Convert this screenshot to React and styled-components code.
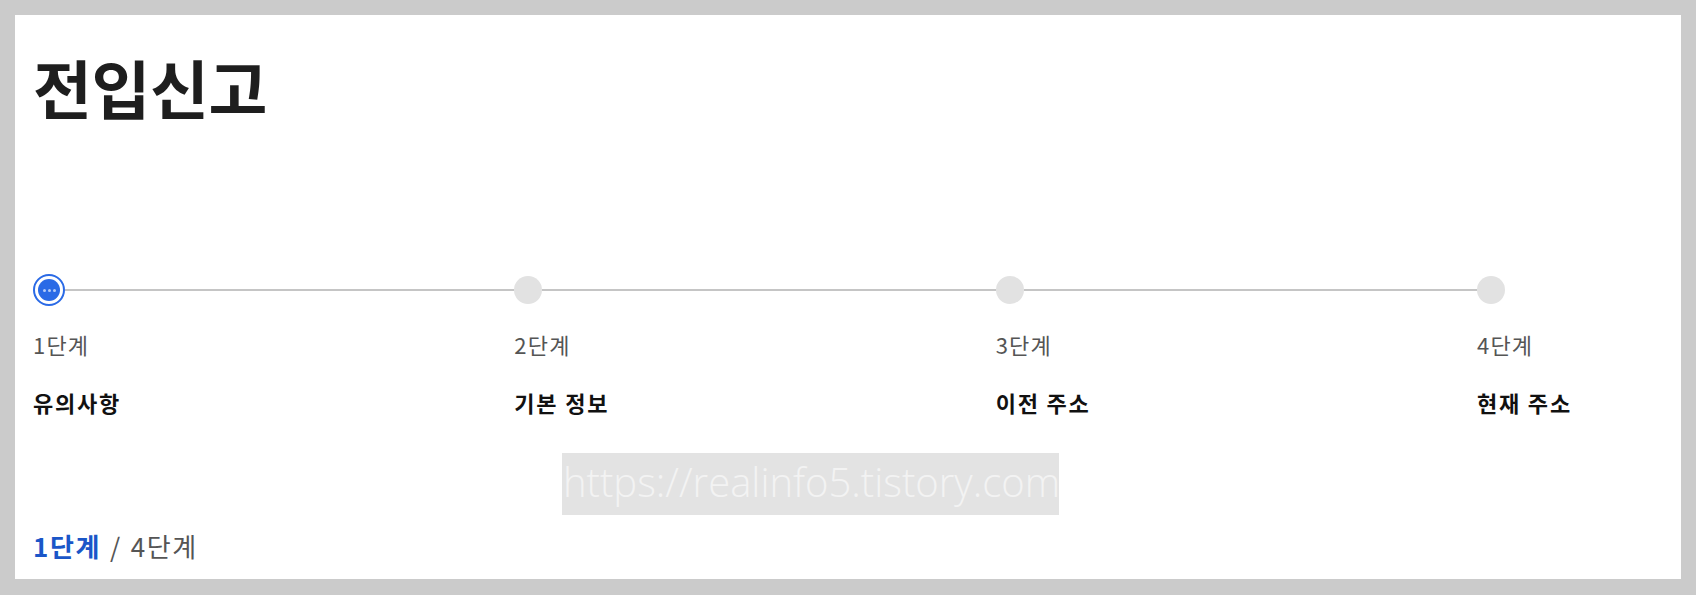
import React from "react";
import styled, { createGlobalStyle } from "styled-components";

const Global = createGlobalStyle`
  html, body { margin: 0; padding: 0; background: #cbcbcb; }
  body { padding: 15px; font-family: "Noto Sans CJK KR", "Noto Sans", sans-serif; }
  * { box-sizing: border-box; }
`;

const Panel = styled.main`
  position: relative;
  background: #fff;
  padding: 35px 18px 12px 18px;
  height: 564px;
`;

const Title = styled.h1`
  margin: 0;
  font-size: 64px;
  line-height: 72px;
  font-weight: 700;
  color: #1e1e1e;
  letter-spacing: -0.4px;
`;

const Steps = styled.ol`
  list-style: none;
  margin: 152px 0 0 0;
  padding: 0;
  display: flex;
`;

const Step = styled.li`
  flex: ${(p) => (p.$last ? "0 0 186px" : "1 1 0")};
  display: flex;
  flex-direction: column;
`;

const Track = styled.div`
  height: 32px;
  display: flex;
  align-items: center;
`;

const Line = styled.div`
  flex: 1;
  height: 2px;
  background: #c5c5c5;
`;

const Dot = styled.span`
  flex: none;
  width: 28px;
  height: 28px;
  border-radius: 50%;
  background: #e2e2e2;
`;

const ActiveDot = styled.span`
  flex: none;
  width: 32px;
  height: 32px;
  border-radius: 50%;
  border: 2px solid #2a6ae6;
  padding: 3px;
  display: flex;
`;

const ActiveInner = styled.span`
  flex: 1;
  border-radius: 50%;
  background: #2a6ae6;
  display: flex;
  align-items: center;
  justify-content: center;
  gap: 2px;
`;

const Pip = styled.i`
  width: 3px;
  height: 3px;
  border-radius: 50%;
  background: rgba(255, 255, 255, 0.65);
`;

const StepNo = styled.div`
  margin-top: 22px;
  font-size: 22px;
  line-height: 32px;
  color: #555;
  font-weight: 400;
  letter-spacing: 1.2px;
`;

const StepName = styled.div`
  margin-top: 26px;
  font-size: 22px;
  line-height: 32px;
  color: #111;
  font-weight: 700;
  letter-spacing: 1.8px;
  white-space: nowrap;
`;

const Counter = styled.div`
  margin-top: 109px;
  font-size: 26px;
  line-height: 38px;
  color: #555;
  display: flex;
  gap: 9px;
  letter-spacing: 1.6px;
`;

const Current = styled.strong`
  color: #1a56c8;
  font-weight: 700;
`;

const Watermark = styled.div`
  position: absolute;
  left: 547px;
  top: 438px;
  width: 497px;
  height: 62px;
  background: #e3e3e3;
  color: #f3f3f3;
  font-family: "Open Sans", "Noto Sans", sans-serif;
  font-weight: 300;
  font-size: 40px;
  line-height: 58px;
  white-space: nowrap;
  overflow: hidden;
  padding-left: 1px;
`;

const steps = [
  { no: "1단계", name: "유의사항" },
  { no: "2단계", name: "기본 정보" },
  { no: "3단계", name: "이전 주소" },
  { no: "4단계", name: "현재 주소" },
];

export default function App() {
  return (
    <>
      <Global />
      <Panel>
        <Title>전입신고</Title>
        <Steps>
          {steps.map((s, i) => {
            const last = i === steps.length - 1;
            return (
              <Step key={s.no} $last={last}>
                <Track>
                  {i === 0 ? (
                    <ActiveDot>
                      <ActiveInner>
                        <Pip />
                        <Pip />
                        <Pip />
                      </ActiveInner>
                    </ActiveDot>
                  ) : (
                    <Dot />
                  )}
                  {!last && <Line />}
                </Track>
                <StepNo>{s.no}</StepNo>
                <StepName>{s.name}</StepName>
              </Step>
            );
          })}
        </Steps>
        <Counter>
          <Current>1단계</Current>
          <span>/</span>
          <span>4단계</span>
        </Counter>
        <Watermark>https://realinfo5.tistory.com</Watermark>
      </Panel>
    </>
  );
}
